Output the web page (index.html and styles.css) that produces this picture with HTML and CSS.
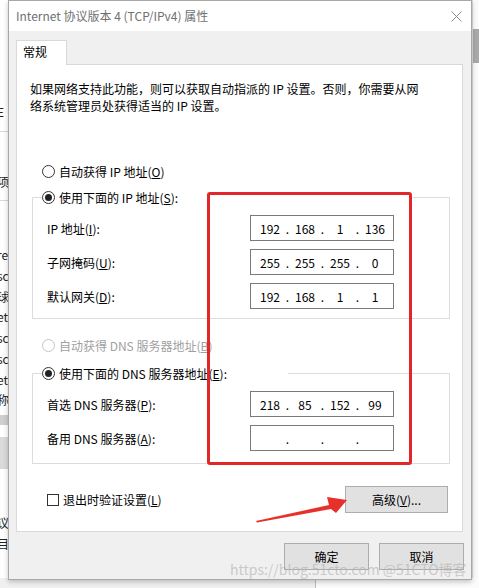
FILE: index.html
```html
<!DOCTYPE html>
<html lang="zh-CN">
<head>
<meta charset="utf-8">
<title>Internet 协议版本 4 (TCP/IPv4) 属性</title>
<link rel="stylesheet" href="styles.css">
</head>
<body>
<div class="desk">
  <div class="bgwin-left">
    <div class="bl-top"></div>
    <div class="bl-item bl-e">E</div>
    <div class="bl-sep"></div>
    <div class="bl-item bl-xiang">项</div>
    <div class="bl-sep"></div>
    <div class="bl-list">
      <div class="bl-item">re</div>
      <div class="bl-item">sc</div>
      <div class="bl-item">球</div>
      <div class="bl-item">et</div>
      <div class="bl-item">sc</div>
      <div class="bl-item">sc</div>
      <div class="bl-item">et</div>
      <div class="bl-item">称</div>
    </div>
    <div class="bl-band"></div>
    <div class="bl-block"></div>
    <div class="bl-item bl-yi">议</div>
    <div class="bl-item">目</div>
  </div>
  <div class="bgwin-right"><div class="br-title"></div></div>
  <div class="bg-bottom"><div class="bgb-left"></div><div class="bgb-right"></div></div>

  <div class="dialog">
    <div class="titlebar">
      <span class="title">Internet 协议版本 4 (TCP/IPv4) 属性</span>
      <svg class="close" width="11" height="11" viewBox="0 0 11 11"><path d="M0.5 0.5L10.5 10.5M10.5 0.5L0.5 10.5" stroke="#8a8a8a" stroke-width="1" fill="none"/></svg>
    </div>
    <div class="body">
      <div class="tabs"><div class="tab">常规</div></div>
      <div class="panel">
        <p class="desc">如果网络支持此功能，则可以获取自动指派的 IP 设置。否则，你需要从网<br>络系统管理员处获得适当的 IP 设置。</p>

        <div class="opt opt-ip"><span class="radio"></span><span>自动获得 IP 地址(<u>O</u>)</span></div>

        <div class="group group-ip">
          <div class="legend legend-ip"><span class="radio checked"></span><span>使用下面的 IP 地址(<u>S</u>):</span></div>
          <div class="fields">
            <span class="lbl">IP 地址(<u>I</u>):</span>
            <div class="ip"><span class="oct">192</span><span class="dot">.</span><span class="oct">168</span><span class="dot">.</span><span class="oct">1</span><span class="dot">.</span><span class="oct">136</span></div>
            <span class="lbl">子网掩码(<u>U</u>):</span>
            <div class="ip"><span class="oct">255</span><span class="dot">.</span><span class="oct">255</span><span class="dot">.</span><span class="oct">255</span><span class="dot">.</span><span class="oct">0</span></div>
            <span class="lbl">默认网关(<u>D</u>):</span>
            <div class="ip"><span class="oct">192</span><span class="dot">.</span><span class="oct">168</span><span class="dot">.</span><span class="oct">1</span><span class="dot">.</span><span class="oct">1</span></div>
          </div>
        </div>

        <div class="opt opt-dns disabled"><span class="radio"></span><span>自动获得 DNS 服务器地址(<u>B</u>)</span></div>

        <div class="group group-dns">
          <div class="legend legend-dns"><span class="radio checked"></span><span>使用下面的 DNS 服务器地址(<u>E</u>):</span></div>
          <div class="fields">
            <span class="lbl">首选 DNS 服务器(<u>P</u>):</span>
            <div class="ip"><span class="oct">218</span><span class="dot">.</span><span class="oct">85</span><span class="dot">.</span><span class="oct">152</span><span class="dot">.</span><span class="oct">99</span></div>
            <span class="lbl">备用 DNS 服务器(<u>A</u>):</span>
            <div class="ip"><span class="oct"></span><span class="dot">.</span><span class="oct"></span><span class="dot">.</span><span class="oct"></span><span class="dot">.</span><span class="oct"></span></div>
          </div>
        </div>

        <div class="panel-foot">
          <div class="check"><span class="box"></span><span>退出时验证设置(<u>L</u>)</span></div>
          <button class="btn btn-adv">高级(<u>V</u>)...</button>
        </div>
      </div>
      <div class="actions">
        <button class="btn btn-dlg">确定</button>
        <button class="btn btn-dlg">取消</button>
      </div>
    </div>
  </div>

  <div class="mark-rect"></div>
  <svg class="mark-arrow" width="100" height="30" viewBox="250 495 100 30">
    <polygon points="256,521 329,505 327,497 347,500 336,513 331,509 257,522.5" fill="#e8302a"/>
  </svg>
  <div class="watermark">https://blog.51cto.com @51CTO博客</div>
</div>
</body>
</html>
```

FILE: styles.css
```css
* { box-sizing: border-box; }
html, body { margin: 0; padding: 0; }
body {
  width: 479px;
  height: 588px;
  overflow: hidden;
  font-family: "Noto Sans CJK SC", "Noto Sans", sans-serif;
  font-size: 12px;
  color: #000;
  background: #f2f2f2;
}
.desk {
  position: relative;
  width: 479px;
  height: 588px;
  overflow: hidden;
  background: #f4f4f4;
}

/* background windows */
.bgwin-left {
  position: absolute;
  left: 0;
  top: 0;
  width: 9px;
  height: 588px;
  background: #fff;
  overflow: hidden;
  display: flex;
  flex-direction: column;
  font-size: 12px;
  line-height: 20px;
  color: #222;
}
.bl-top { height: 102px; }
.bl-item { height: 20.7px; margin-left: -3px; white-space: nowrap; }
.bl-sep { height: 1px; background: #d8d8d8; margin: 8px 0 40px; }
.bl-xiang { margin-top: 0; }
.bl-list { margin-top: 4px; display: flex; flex-direction: column; }
.bl-band { height: 10px; background: #cfcfcf; margin-top: 4px; }
.bl-block { height: 32px; background: #dadada; margin-top: 12px; }
.bl-yi { margin-top: 44px; }

.bgwin-right {
  position: absolute;
  right: 0;
  top: 0;
  width: 7px;
  height: 588px;
  background: #fafafa;
  border-left: 1px solid #dcdcdc;
}
.br-title { height: 34px; margin-top: 29px; background: #a9a9a9; }

.bg-bottom {
  position: absolute;
  left: 0;
  bottom: 0;
  width: 479px;
  height: 10px;
  display: flex;
}
.bgb-left { width: 316px; background: #f0f0f0; border-right: 1px solid #bdbdbd; }
.bgb-right { flex: 1; background: #fbfbfb; }

/* dialog window */
.dialog {
  position: absolute;
  left: 8px;
  top: 0;
  width: 464px;
  height: 580px;
  border: 1px solid #a8a8a8;
  background: #f0f0f0;
  box-shadow: 0 2px 5px rgba(0, 0, 0, 0.22);
  display: flex;
  flex-direction: column;
}
.titlebar {
  height: 30px;
  background: #fff;
  display: flex;
  align-items: center;
  justify-content: space-between;
  padding: 0 9px 0 7px;
}
.title { color: #707070; font-size: 12px; line-height: 16px; white-space: nowrap; }
.close { display: block; }

.body { flex: 1; padding: 9px 8px 0 7px; display: flex; flex-direction: column; }
.tabs { display: flex; height: 24px; }
.tab {
  position: relative;
  z-index: 1;
  width: 51px;
  height: 25px;
  background: #fff;
  border: 1px solid #d9d9d9;
  border-bottom: none;
  padding-left: 6px;
  line-height: 22px;
}
.panel {
  height: 468px;
  background: #fff;
  border: 1px solid #d9d9d9;
  display: flex;
  flex-direction: column;
}
.desc {
  margin: 15px 0 0 13px;
  line-height: 17px;
  white-space: nowrap;
}

.opt, .legend, .check {
  display: flex;
  align-items: center;
  height: 17px;
  gap: 4px;
  white-space: nowrap;
  line-height: 17px;
}
.opt { margin-left: 25px; }
.opt-ip { margin-top: 48.5px; }
.opt-dns { margin-top: 17.5px; }
.disabled { color: #a0a0a0; }

.radio {
  width: 13px;
  height: 13px;
  border: 1px solid #333;
  border-radius: 50%;
  background: #fff;
  flex: none;
  display: flex;
  align-items: center;
  justify-content: center;
}
.radio.checked::after {
  content: "";
  width: 7px;
  height: 7px;
  border-radius: 50%;
  background: #222;
}
.disabled .radio { border-color: #c4c4c4; }

.group {
  margin: 0 12px 0 15px;
  border: 1px solid #dcdcdc;
}
.group-ip { margin-top: 17.5px; padding-bottom: 9px; }
.group-dns { margin-top: 19.5px; padding-bottom: 12px; }
.legend {
  margin: -9px 0 0 9px;
  background: #fff;
}
.legend-ip { width: 371px; }
.legend-dns { width: 246px; }

.fields {
  display: grid;
  grid-template-columns: 203px 144px;
  row-gap: 8px;
  align-items: center;
  margin-top: 9px;
  padding-left: 14px;
}
.lbl { white-space: nowrap; line-height: 17px; }
.ip {
  height: 26px;
  border: 1px solid #7a7a7a;
  display: flex;
  align-items: center;
  padding-left: 1.5px;
  line-height: 17px;
}
.oct { width: 35px; text-align: center; }
.dot { width: 0; display: flex; justify-content: center; }

.panel-foot {
  margin: 22px 14px 0 30px;
  display: flex;
  align-items: center;
  justify-content: space-between;
}
.check { gap: 4px; }
.box { width: 12px; height: 12px; border: 1px solid #333; background: #fff; flex: none; }

.btn {
  font-family: inherit;
  font-size: 12px;
  color: #000;
  background: #e1e1e1;
  border: 1px solid #adadad;
  padding: 0;
  line-height: 17px;
}
.btn-adv { width: 103px; height: 27px; }
.actions {
  margin: 11px -1px 0 0;
  display: flex;
  justify-content: flex-end;
  gap: 10px;
}
.btn-dlg { width: 85px; height: 27px; }

/* annotations drawn over the screenshot */
.mark-rect {
  position: absolute;
  left: 207px;
  top: 192px;
  width: 205px;
  height: 273px;
  border: 3px solid #e3262a;
  border-radius: 3px;
}
.mark-arrow { position: absolute; left: 250px; top: 495px; }
.watermark {
  position: absolute;
  left: 230px;
  top: 560px;
  font-size: 14px;
  line-height: 18px;
  color: rgba(175, 175, 175, 0.6);
  white-space: nowrap;
}
```
